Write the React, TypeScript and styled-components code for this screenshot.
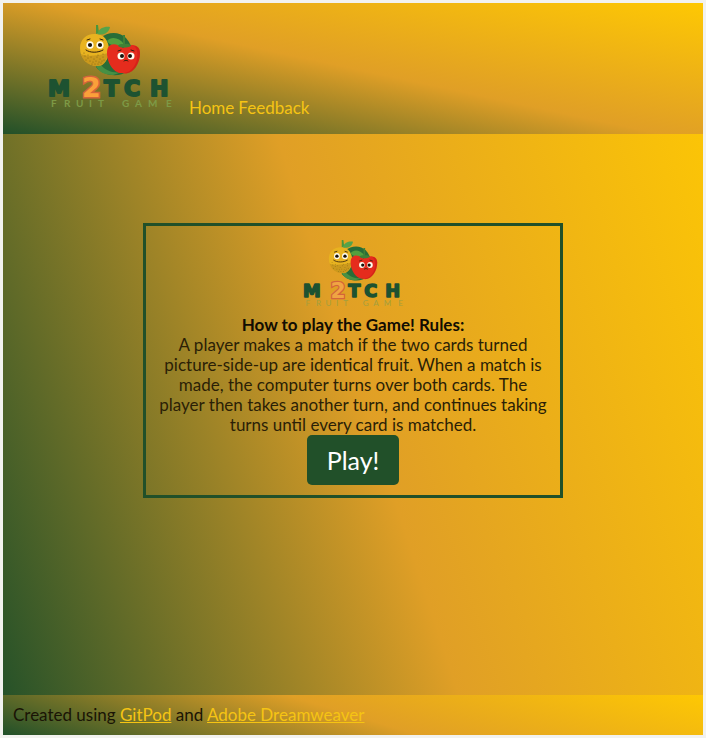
import React from "react";
import styled, { createGlobalStyle } from "styled-components";

const colors = {
  green: "#215029",
  orange: "#e09f26",
  yellow: "#fec803",
  link: "#f6c413",
  paper: "#f2f2ef",
};

const stops = `${colors.green}, ${colors.orange}, ${colors.yellow}`;

const GlobalStyle = createGlobalStyle`
  * { box-sizing: border-box; }
  body {
    margin: 0;
    background: ${colors.paper};
    color: #1a1405;
    font-family: Lato, "Liberation Sans", sans-serif;
    font-size: 17px;
    line-height: 20px;
  }
`;

const Frame = styled.div`
  min-height: 100vh;
  padding: 3px;
  display: flex;
`;

const Page = styled.div`
  flex: 1;
  display: flex;
  flex-direction: column;
  background: linear-gradient(72deg, ${stops});
`;

const Header = styled.header`
  display: flex;
  align-items: flex-end;
  gap: 6px;
  padding: 17px 35px 16px;
  background: linear-gradient(12deg, ${stops});
`;

const HomeLink = styled.a`
  display: flex;
`;

const Nav = styled.nav`
  display: flex;
  gap: 4px;
`;

const NavLink = styled.a`
  color: ${colors.link};
  text-decoration: none;
`;

const Main = styled.main`
  flex: 1;
  display: flex;
  flex-direction: column;
  align-items: center;
  padding: 89px 0;
`;

const Card = styled.section`
  width: 60%;
  display: flex;
  flex-direction: column;
  align-items: center;
  padding: 10px 12px;
  border: 3px solid ${colors.green};
  text-align: center;
`;

const Title = styled.h1`
  margin: 0;
  font-size: 17px;
  line-height: 20px;
  font-weight: 700;
  color: #120d02;
`;

const Rules = styled.p`
  margin: 0;
  color: #2b1f06;
`;

const PlayButton = styled.button`
  height: 50px;
  padding: 0 20px;
  border: 0;
  border-radius: 5px;
  background: ${colors.green};
  color: #fff;
  font-family: inherit;
  font-size: 25px;
  cursor: pointer;
`;

const Footer = styled.footer`
  padding: 10px;
  background: linear-gradient(17deg, ${stops});
`;

const FooterLink = styled.a`
  color: ${colors.link};
`;

const LogoSvg = styled.svg<{ $height: number }>`
  display: block;
  height: ${(p) => p.$height}px;
  width: auto;
`;

const Word = styled.text`
  font-family: "DejaVu Sans", sans-serif;
  font-weight: 700;
  font-size: 22px;
  fill: #1d5231;
  stroke: #1d5231;
  stroke-width: 2;
  stroke-linejoin: round;
`;

const Numeral = styled.text<{ $thin: boolean }>`
  font-family: "DejaVu Sans", sans-serif;
  font-weight: 700;
  font-size: 27px;
  fill: ${(p) => (p.$thin ? "#f0a443" : "#fba03a")};
  stroke: #d4653a;
  stroke-width: 3;
  paint-order: stroke;
`;

const Tagline = styled.text<{ $thin: boolean }>`
  font-family: Lato, sans-serif;
  font-size: 10px;
  font-weight: ${(p) => (p.$thin ? 400 : 700)};
  fill: ${(p) => (p.$thin ? "#a39f3e" : "#7d9a46")};
`;

const speckles = [
  [85, 56], [88, 58], [91, 57], [94, 59], [97, 57], [100, 59], [103, 57],
  [86, 60], [90, 61], [93, 62], [96, 61], [99, 62], [102, 61], [104, 60],
  [92, 64], [95, 64], [98, 64], [101, 63], [84, 53], [88, 55], [98, 55], [103, 54],
];

function Logo({ height, thin = false }: { height: number; thin?: boolean }) {
  return (
    <LogoSvg $height={height} viewBox="38 20 145 98" role="img" aria-label="M2TCH Fruit Game">
      <path d="M101 38C107 32 119 31 126 38C134 46 135 63 128 71C119 78 103 76 96 67Z" fill="#286d38" />
      <path d="M101 65C105 70 113 74 122 72L113 75C104 75 98 71 96 66Z" fill="#479044" />
      <path d="M94 34C103 33 109 40 109 50C109 60 103 67 97 66C88 66 80 59 80 48C80 40 86 34 94 34Z" fill="#e8b320" />
      <path d="M81 54C86 57 97 56 108 53C107 61 103 67 97 66C89 66 83 61 81 54Z" fill="#ae8017" opacity="0.5" />
      {speckles.map(([x, y]) => (
        <circle key={`${x}-${y}`} cx={x} cy={y} r="0.5" fill="#7a6117" />
      ))}
      <path d="M96 25L98 25L99 33L96 34Z" fill="#4b963a" />
      <path d="M98 33C99 28 105 26 110 27C109 33 103 36 97 34Z" fill="#55a34a" />
      <path d="M107 41C111 36 119 37 124 44C118 48 110 46 107 41Z" fill="#54a03e" />
      <path d="M123 48C115 42 107 43 107 53C107 64 115 74 122 73C131 76 140 65 140 53C140 44 130 43 123 48Z" fill="#e52c1d" />
      <path d="M134 46C137 48 138 53 137 59C135 68 130 72 124 73C133 75 140 64 140 53C140 49 138 46 134 46Z" fill="#c91c18" opacity="0.6" />
      <path d="M123 35L125 35L125 44C129 43 131 45 131 46C127 48 121 48 118 46C119 44 121 44 123 44Z" fill="#3f8136" />
      <g fill="#fffdf0">
        <ellipse cx="90" cy="45" rx="3.6" ry="3.8" />
        <ellipse cx="100" cy="45" rx="3.6" ry="3.8" />
        <ellipse cx="121" cy="56" rx="3.5" ry="3.6" />
        <ellipse cx="131" cy="56" rx="3.5" ry="3.6" />
      </g>
      <g fill="#17120c">
        <circle cx="90" cy="45" r="2.1" />
        <circle cx="100" cy="45" r="2.1" />
        <circle cx="122" cy="56" r="2" />
        <circle cx="130" cy="56" r="2" />
      </g>
      <g fill="none" stroke="#33200c" strokeWidth="1" strokeLinecap="round">
        <path d="M87 40L90 39M100 39L103 40" />
        <path d="M86 50C90 53 98 53 103 50" />
        <path d="M118 51L121 50M131 50L134 51" />
        <path d="M124 61C125 60 127 60 128 61" />
      </g>
      <Word x="48 104 124 150" y="96">MTCH</Word>
      <Numeral $thin={thin} x="82" y="97">2</Numeral>
      <Tagline $thin={thin} x="51 64 76 89 98 122 135 148 166" y="107">FRUITGAME</Tagline>
    </LogoSvg>
  );
}

export default function App() {
  return (
    <>
      <GlobalStyle />
      <Frame>
        <Page>
          <Header>
            <HomeLink href="#home">
              <Logo height={98} />
            </HomeLink>
            <Nav>
              <NavLink href="#home">Home</NavLink>
              <NavLink href="#feedback">Feedback</NavLink>
            </Nav>
          </Header>
          <Main>
            <Card>
              <Logo height={79} thin />
              <Title>How to play the Game! Rules:</Title>
              <Rules>
                A player makes a match if the two cards turned picture-side-up are identical
                fruit. When a match is made, the computer turns over both cards. The player
                then takes another turn, and continues taking turns until every card is
                matched.
              </Rules>
              <PlayButton type="button">Play!</PlayButton>
            </Card>
          </Main>
          <Footer>
            Created using <FooterLink href="#gitpod">GitPod</FooterLink> and{" "}
            <FooterLink href="#dreamweaver">Adobe Dreamweaver</FooterLink>
          </Footer>
        </Page>
      </Frame>
    </>
  );
}
